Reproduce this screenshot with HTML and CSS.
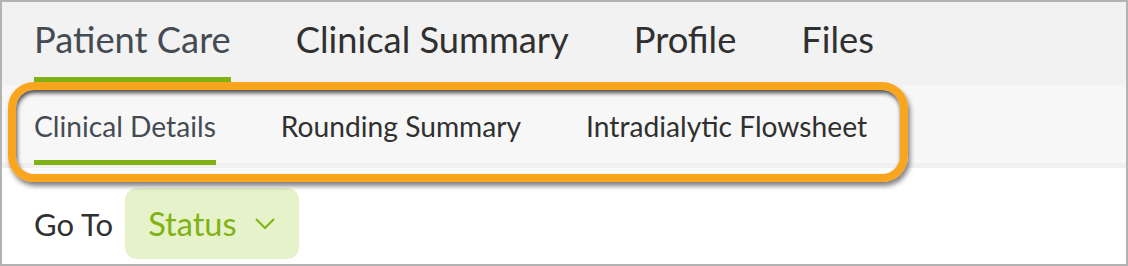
FILE: index.html
```html
<!DOCTYPE html>
<html>
<head>
<meta charset="utf-8">
<link rel="stylesheet" href="styles.css">
</head>
<body>
<div class="frame">
  <nav class="topnav">
    <a class="tab active">Patient Care</a>
    <a class="tab">Clinical Summary</a>
    <a class="tab">Profile</a>
    <a class="tab">Files</a>
  </nav>
  <nav class="subnav">
    <a class="subtab active">Clinical Details</a>
    <a class="subtab">Rounding Summary</a>
    <a class="subtab">Intradialytic Flowsheet</a>
  </nav>
  <div class="goto">
    <span class="goto-label">Go To</span>
    <button class="status">Status
      <svg class="chev" width="20" height="11" viewBox="0 0 20 11"><path d="M1 1 L10 10 L19 1" fill="none" stroke="#7fb212" stroke-width="2"/></svg>
    </button>
  </div>
  <div class="highlight"></div>
</div>
</body>
</html>
```
FILE: styles.css
```css
html, body { margin: 0; padding: 0; background: #fff; }
body { font-family: Lato, "Noto Sans", sans-serif; }
.frame {
  position: relative;
  width: 1128px;
  height: 266px;
  box-sizing: border-box;
  border: 2px solid #b3b3b3;
  overflow: hidden;
}
.topnav {
  display: flex;
  gap: 65px;
  height: 83px;
  padding-left: 32px;
  background: #f2f2f2;
  box-sizing: border-box;
}
.tab {
  height: 80px;
  box-sizing: border-box;
  padding-top: 16px;
  font-size: 36.3px;
  line-height: 43px;
  color: #303030;
  border-bottom: 5px solid transparent;
}
.tab.active { color: #454b53; border-bottom-color: #7fb212; }
.subnav {
  display: flex;
  gap: 65px;
  height: 78px;
  padding-left: 32px;
  background: #f7f7f7;
  border-bottom: 5px solid #f0f0f0;
}
.subtab {
  height: 80px;
  box-sizing: border-box;
  padding-top: 24px;
  font-size: 28.2px;
  line-height: 34px;
  color: #303030;
  border-bottom: 5px solid transparent;
}
.subtab.active { color: #454b53; border-bottom-color: #7fb212; }
.goto {
  display: flex;
  align-items: center;
  gap: 12px;
  padding: 20px 0 0 32px;
}
.goto-label { font-size: 31px; color: #303030; }
.status {
  display: flex;
  align-items: center;
  gap: 18px;
  height: 71px;
  width: 174px;
  padding: 0 0 0 23px;
  border: none;
  border-radius: 12px;
  background: #e6f2c9;
  color: #7fb212;
  font-family: Lato, "Noto Sans", sans-serif;
  font-size: 32.5px;
}
.chev { display: block; }
.highlight {
  position: absolute;
  left: 6px;
  top: 80px;
  width: 900px;
  height: 100px;
  box-sizing: border-box;
  border: 8px solid #f9a51e;
  border-radius: 26px;
  box-shadow: inset 1px 3px 4px rgba(0,0,0,0.7), 2px 4px 5px rgba(0,0,0,0.5);
}
```
